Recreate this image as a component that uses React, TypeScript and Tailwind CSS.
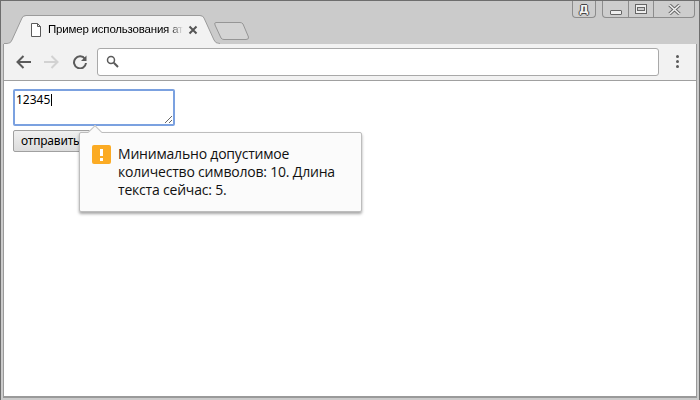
import React from 'react';

function WindowButtons() {
    return (
        <div className="absolute top-0 right-[4px] flex items-start gap-[6px]">
            <div className="flex h-[17px] w-[24px] items-center justify-center rounded-b-[4px] border border-t-0 border-[#8c8c8c] bg-[#cdcdcd]">
                <span className="text-[11px] font-bold leading-none text-[#f5f5f5] [font-family:'DejaVu_Sans',sans-serif] [text-shadow:1px_0_#444,-1px_0_#444,0_1px_#444,0_-1px_#444]">Д</span>
            </div>
            <div className="flex h-[17px] rounded-b-[4px] border border-t-0 border-[#8c8c8c] bg-[#cdcdcd]">
                <div className="flex w-[26px] items-center justify-center border-r border-[#8c8c8c]">
                    <div className="mt-[6px] h-[5px] w-[12px] rounded-[1px] border border-[#666] bg-[#eeeeee]" />
                </div>
                <div className="flex w-[25px] items-center justify-center border-r border-[#8c8c8c]">
                    <div className="flex h-[10px] w-[12px] items-center justify-center border border-[#666] bg-[#eeeeee]">
                        <div className="h-[4px] w-[8px] border border-[#666] bg-[#cdcdcd]" />
                    </div>
                </div>
                <div className="flex w-[40px] items-center justify-center">
                    <svg width="13" height="11" viewBox="0 0 13 11">
                        <path d="M1.5 1 L11.5 10 M11.5 1 L1.5 10" stroke="#666" strokeWidth="3.4" />
                        <path d="M1.5 1 L11.5 10 M11.5 1 L1.5 10" stroke="#f0f0f0" strokeWidth="1.6" />
                    </svg>
                </div>
            </div>
        </div>
    );
}

function Tab() {
    return (
        <div className="relative h-[29px] w-[216px]">
            <svg className="absolute inset-0" width="216" height="29" viewBox="0 0 216 29">
                <path d="M0 28 H3 Q7 28 8 25 L18 3 Q19 1 22 1 H196 Q199 1 200 3 L210 25 Q211 28 216 28 V29 H0 Z" fill="#f2f2f2" />
                <path d="M0 28.5 H3 Q7 28.5 8 25 L18 3 Q19 0.5 22 0.5 H196 Q199 0.5 200 3 L210 25 Q211 28.5 216 28.5" fill="none" stroke="#9b9b9b" />
            </svg>
            <div className="relative flex h-full items-center pl-[26px]">
                <svg width="12" height="14" viewBox="0 0 12 14" className="shrink-0">
                    <path d="M1.5 0.5 H7.5 L10.5 3.5 V13.5 H1.5 Z M7.5 0.5 V3.5 H10.5" fill="#fff" stroke="#5a5a5a" />
                </svg>
                <span className="ml-[6px] w-[135px] overflow-hidden whitespace-nowrap text-[11.5px] tracking-[-0.2px] text-black [font-family:'Liberation_Sans',sans-serif] [mask-image:linear-gradient(to_right,#000_122px,transparent_135px)]">
                    Пример использования атрибута
                </span>
                <svg width="10" height="10" viewBox="0 0 10 10" className="ml-[5px] shrink-0">
                    <path d="M1.5 1.5 L8.5 8.5 M8.5 1.5 L1.5 8.5" stroke="#555" strokeWidth="2" />
                </svg>
            </div>
        </div>
    );
}

function Toolbar() {
    return (
        <div className="flex h-[37px] items-center border-b border-[#a0a0a0] bg-[#f2f2f2] pb-[1px]">
            <svg width="15" height="14" viewBox="0 0 15 14" className="ml-[12px]">
                <path d="M15 7 H2 M7.5 1 L1.5 7 L7.5 13" fill="none" stroke="#5a5a5a" strokeWidth="2" />
            </svg>
            <svg width="15" height="14" viewBox="0 0 15 14" className="ml-[13px]">
                <path d="M0 7 H13 M7.5 1 L13.5 7 L7.5 13" fill="none" stroke="#d2d2d2" strokeWidth="2" />
            </svg>
            <svg width="14" height="14" viewBox="0 0 14 14" className="ml-[14px]">
                <path d="M12 4 A6 6 0 1 0 13 8" fill="none" stroke="#5a5a5a" strokeWidth="2" />
                <path d="M13.5 0.5 V6 H8 Z" fill="#5a5a5a" />
            </svg>
            <div className="ml-[10px] flex h-[28px] w-[562px] items-center rounded-[3px] border border-[#a9a9a9] bg-white pl-[8px]">
                <svg width="13" height="13" viewBox="0 0 13 13">
                    <circle cx="5" cy="5" r="3.5" fill="none" stroke="#5a5a5a" strokeWidth="1.5" />
                    <path d="M7.8 7.8 L12 12" stroke="#5a5a5a" strokeWidth="2" />
                </svg>
            </div>
            <div className="ml-[17px] flex flex-col gap-[2px]">
                <div className="h-[3px] w-[3px] rounded-full bg-[#5a5a5a]" />
                <div className="h-[3px] w-[3px] rounded-full bg-[#5a5a5a]" />
                <div className="h-[3px] w-[3px] rounded-full bg-[#5a5a5a]" />
            </div>
        </div>
    );
}

function Bubble() {
    return (
        <div className="absolute left-[75px] top-[51px] h-[80px] w-[283px] rounded-[2px] border border-[#bdbdbd] bg-[#fbfbfb] shadow-[0_2px_3px_rgba(0,0,0,0.35)]">
            <div className="absolute -top-[6px] left-[10px] h-[10px] w-[10px] rotate-45 border-l border-t border-[#c4c4c4] bg-[#fbfbfb]" />
            <div className="relative flex pl-[12px] pt-[12px]">
                <div className="flex h-[19px] w-[19px] shrink-0 items-center justify-center rounded-[2px] bg-[#fbab24]">
                    <div className="flex flex-col items-center gap-[2px]">
                        <div className="h-[7px] w-[3px] bg-white" />
                        <div className="h-[3px] w-[3px] bg-white" />
                    </div>
                </div>
                <p className="ml-[7px] w-[230px] text-[14px] leading-[18px] tracking-[-0.2px] text-[#111] [font-family:'Open_Sans',sans-serif]">
                    Минимально допустимое количество символов: 10. Длина текста сейчас: 5.
                </p>
            </div>
        </div>
    );
}

export default function App() {
    return (
        <div className="flex h-[400px] w-[700px] flex-col overflow-hidden border-x border-t border-[#6e6e6e] bg-[#cbcbcb]">
            <div className="relative h-[43px] shrink-0">
                <WindowButtons />
                <div className="absolute bottom-0 left-[3px] flex items-end">
                    <Tab />
                    <svg width="36" height="18" viewBox="0 0 36 18" className="-ml-[6px] mb-[4px]">
                        <path d="M2 0.5 H26 Q28 0.5 29 2 L34.5 15 Q35 17.5 32 17.5 H10 Q8 17.5 7 16 L1 3 Q0 0.5 2 0.5 Z" fill="#d4d4d4" stroke="#969696" />
                    </svg>
                </div>
            </div>
            <div className="mx-[2px] mb-[2px] flex min-h-0 flex-1 flex-col border-x border-b-2 border-[#9a9a9a]">
                <Toolbar />
                <div className="relative flex-1 bg-white pl-[9px] pt-[8px]">
                    <textarea
                        readOnly
                        value="12345"
                        className="block h-[37px] w-[162px] rounded-[2px] border-2 border-[#7ba1e0] bg-white px-[1px] py-[1px] text-[12px] leading-[16px] text-black outline-none [font-family:'Noto_Sans',sans-serif]"
                    />
                    {/* caret */}
                    <div className="absolute left-[47px] top-[13px] h-[12px] w-px bg-black" />
                    <button className="mt-[4px] flex h-[22px] w-[80px] items-center rounded-[2px] border border-[#a0a0a0] bg-linear-to-b from-[#f0f0f0] to-[#dcdcdc] pl-[7px] text-[12px] tracking-[-0.2px] text-black [font-family:'Noto_Sans',sans-serif]">
                        отправить
                    </button>
                    <Bubble />
                </div>
            </div>
        </div>
    );
}
